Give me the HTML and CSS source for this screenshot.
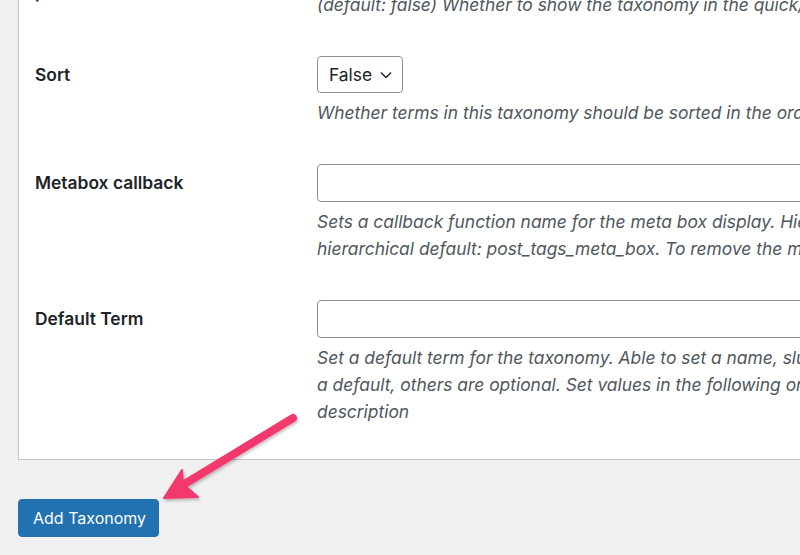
FILE: index.html
```html
<!DOCTYPE html>
<html lang="en">
<head>
<meta charset="utf-8">
<title>Add Taxonomy</title>
<link rel="stylesheet" href="styles.css">
</head>
<body>
<div class="page">
  <div class="panel">
    <div class="row row-prev">
      <div class="label label-prev">Show in quick/bulk edit panel</div>
      <div class="field">
        <p class="desc">(default: false) Whether to show the taxonomy in the quick/bulk edit panel.</p>
      </div>
    </div>
    <div class="row">
      <div class="label">Sort</div>
      <div class="field">
        <div class="select">
          <span>False</span>
          <svg class="chev" width="12" height="8" viewBox="0 0 12 8"><polyline points="1,1.5 6,6.5 11,1.5" fill="none" stroke="#1d2327" stroke-width="1.4"/></svg>
        </div>
        <p class="desc">Whether terms in this taxonomy should be sorted in the order they are provided to wp_set_object_terms().</p>
      </div>
    </div>
    <div class="row">
      <div class="label">Metabox callback</div>
      <div class="field">
        <div class="input"></div>
        <p class="desc">Sets a callback function name for the meta box display. Hierarchical default: post_categories_meta_box, non-<br>hierarchical default: post_tags_meta_box. To remove the metabox completely, use "false".</p>
      </div>
    </div>
    <div class="row">
      <div class="label">Default Term</div>
      <div class="field">
        <div class="input"></div>
        <p class="desc">Set a default term for the taxonomy. Able to set a name, slug, and description. Only a name is required if setting<br>a default, others are optional. Set values in the following order, separated by comma. Example: name, slug,<br>description</p>
      </div>
    </div>
  </div>
  <div class="actions">
    <button class="btn" type="button">Add Taxonomy</button>
  </div>
  <svg class="arrow" width="800" height="555" viewBox="0 0 800 555">
    <defs>
      <filter id="sh" x="-20%" y="-20%" width="140%" height="140%">
        <feDropShadow dx="1" dy="2" stdDeviation="1.5" flood-color="#000" flood-opacity="0.25"/>
      </filter>
    </defs>
    <g filter="url(#sh)" fill="#f2386c" stroke="#f2386c">
      <line x1="293" y1="418" x2="178" y2="488" stroke-width="8" stroke-linecap="round"/>
      <path d="M164 498 L182 470 L183 484 L198 497 Z" stroke-width="2" stroke-linejoin="round"/>
    </g>
  </svg>
</div>
</body>
</html>
```
FILE: styles.css
```css
* { box-sizing: border-box; }
html, body { margin: 0; padding: 0; }
body {
  background: #f0f0f1;
  font-family: Inter, "Liberation Sans", sans-serif;
  color: #1d2327;
  overflow: hidden;
  width: 800px;
  height: 555px;
}
.page {
  position: relative;
  width: 800px;
  height: 555px;
  padding-left: 18px;
  overflow: hidden;
}
.panel {
  background: #fff;
  border: 1px solid #c3c4c7;
  border-right: none;
  width: 1200px;
  margin-top: -10px;
  padding: 0 0 15px 16px;
}
.row {
  display: grid;
  grid-template-columns: 282px 1fr;
  padding: 19px 0;
  align-items: start;
}
.label {
  font-size: 17.4px;
  font-weight: 600;
  line-height: 38px;
  white-space: nowrap;
}
.row-prev { padding-top: 0; }
.label-prev {
  line-height: 22px;
  white-space: normal;
  width: 210px;
  align-self: end;
  margin-top: -44px;
  margin-bottom: 15px;
}
.field { min-width: 0; }
.select {
  display: inline-flex;
  align-items: center;
  gap: 8px;
  height: 37px;
  padding: 0 8px 0 11px;
  border: 1px solid #8c8f94;
  border-radius: 4px;
  font-size: 17.4px;
  width: 86px;
}
.chev { margin-top: 1px; }
.input {
  height: 38px;
  border: 1px solid #8c8f94;
  border-radius: 4px;
  width: 800px;
}
.desc {
  margin: 6px 0 0;
  font-size: 17.4px;
  line-height: 27px;
  font-style: italic;
  color: #50575e;
  white-space: nowrap;
}
.row-prev .desc { margin-top: 0; }
.actions { padding-top: 39px; }
.btn {
  height: 38px;
  padding: 0 14px;
  width: 141px;
  background: #2271b1;
  border: 1px solid #2271b1;
  border-radius: 4px;
  color: #fff;
  font-family: Inter, "Liberation Sans", sans-serif;
  font-size: 16px;
  white-space: nowrap;
}
.arrow {
  position: absolute;
  left: 0;
  top: 0;
  pointer-events: none;
}
```
